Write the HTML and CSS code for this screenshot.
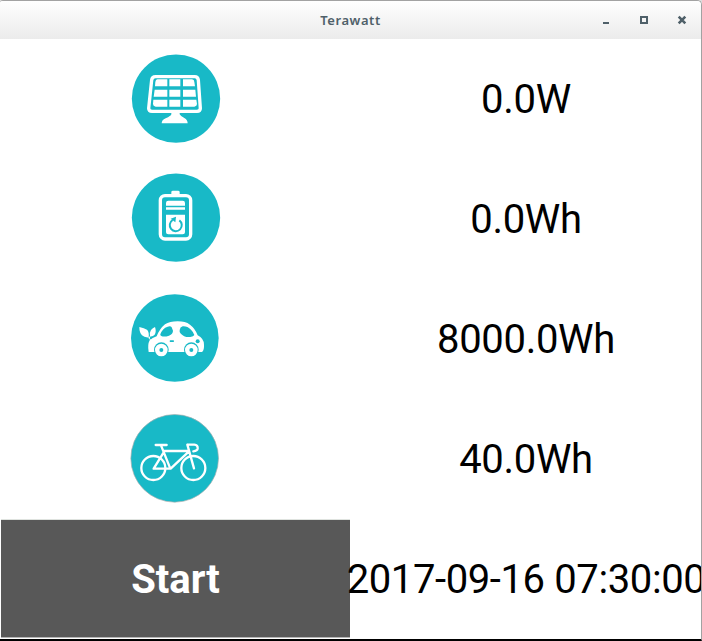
FILE: index.html
```html
<!DOCTYPE html>
<html lang="en">
<head>
<meta charset="utf-8">
<title>Terawatt</title>
<link rel="stylesheet" href="styles.css">
</head>
<body>
<div class="window">
  <header class="titlebar">
    <h1 class="title">Terawatt</h1>
    <div class="controls">
      <svg viewBox="0 0 10 10" shape-rendering="crispEdges"><path d="M2 7h6v2H2z" fill="#4f6069"/></svg>
      <svg viewBox="0 0 10 10" shape-rendering="crispEdges"><path d="M2 2h6v6H2z" fill="none" stroke="#4f6069" stroke-width="2"/></svg>
      <svg viewBox="0 0 10 10"><path d="M1.700 1.700l6.600 6.600M8.300 1.700l-6.600 6.600" stroke="#4f6069" stroke-width="2.600"/></svg>
    </div>
  </header>
  <main class="grid">
    <div class="cell">
      <svg class="icon" viewBox="3 3 300 300">
        <circle cx="153" cy="152" r="132.5" fill="#18b9c7"/>
        <path d="M92 86H209Q219 86 220 96L226 181Q226 190 216 190H81Q71 190 71 181L80 96Q81 86 92 86Z" fill="#18b9c7" stroke="#fff" stroke-width="10"/>
        <path d="M97 94H127V115H90L91 102Q92 95 97 94ZM133 94H166V115H133ZM174 94H201Q208 95 208 102L210 115H174ZM89 125H127V146H86ZM133 125H166V146H133ZM174 125H211L213 146H174ZM85 155H127V176H92Q84 175 84 168ZM133 155H166V176H133ZM174 155H214L216 168Q216 175 208 176H174Z" fill="#fff"/>
        <path d="M139 190H164V199Q166 204 178 210Q188 216 188 226H110Q110 216 122 211Q138 204 139 199Z" fill="#fff"/>
      </svg>
    </div>
    <div class="cell value">0.0W</div>
    <div class="cell">
      <svg class="icon" viewBox="3 3 300 300">
        <circle cx="153" cy="149" r="132.5" fill="#18b9c7"/>
        <path d="M139 80V72Q139 68 144 68H159Q164 68 164 72V80Z" fill="#fff"/>
        <rect x="106" y="83" width="91" height="130" rx="14" fill="none" stroke="#fff" stroke-width="10"/>
        <path d="M130 98H173Q180 98 180 105V113H123V105Q123 98 130 98ZM123 118H180V125H123ZM123 140H180V193Q180 199 173 199H130Q123 199 123 193Z" fill="#fff"/>
        <path d="M143 156A18 18 0 1 0 163 157" fill="none" stroke="#18b9c7" stroke-width="6"/>
        <path d="M137 152L153 146L151 163Z" fill="#18b9c7"/>
      </svg>
    </div>
    <div class="cell value">0.0Wh</div>
    <div class="cell">
      <svg class="icon" viewBox="3 3 300 300">
        <circle cx="149.500" cy="150" r="131.500" fill="#18b9c7"/>
        <path d="M71 192Q67 170 74 157Q82 149 95 145Q104 122 120 109Q134 100 158 100Q181 100 195 110Q211 122 218 142Q237 152 237 170Q238 187 231 192Z" fill="#fff"/>
        <path d="M43 117Q58 120 66 125Q73 131 71 148Q58 149 51 142Q43 134 43 117ZM90 117Q95 131 89 140Q84 146 75 145Q73 133 78 126Q83 120 90 117Z" fill="#fff"/>
        <path d="M71 148Q73 154 79 158M75 145L73 150" fill="none" stroke="#fff" stroke-width="3"/>
        <path d="M106 139Q112 121 128 116Q137 113 140 118L144 128Q144 138 132 143Q117 148 109 144Q105 143 106 139ZM164 126Q165 117 173 115Q187 114 198 125Q206 133 208 141Q206 146 196 147H184Q170 143 164 132Z" fill="#18b9c7"/>
        <rect x="134" y="157" width="13" height="5" rx="2" fill="#18b9c7"/>
        <circle cx="218" cy="160" r="6" fill="#18b9c7"/>
        <g fill="#18b9c7" stroke="#fff" stroke-width="13">
          <circle cx="109" cy="185" r="22" stroke="none"/>
          <circle cx="199" cy="185" r="22" stroke="none"/>
          <circle cx="109" cy="186" r="12.500"/>
          <circle cx="199" cy="186" r="12.500"/>
        </g>
      </svg>
    </div>
    <div class="cell value">8000.0Wh</div>
    <div class="cell">
      <svg class="icon" viewBox="3 3 300 300">
        <circle cx="149" cy="151" r="131.500" fill="#18b9c7" stroke="#a9aeae" stroke-width="2"/>
        <g fill="none" stroke="#fff" stroke-width="7" stroke-linecap="round" stroke-linejoin="round">
          <circle cx="85" cy="180" r="36"/>
          <circle cx="205" cy="180" r="36"/>
          <path d="M92 111H125M108 112L136 182M115 129H190M192 130L137 182H86L116 133M189 110H208Q219 111 218 122Q217 129 205 130M187 110L207 181"/>
        </g>
      </svg>
    </div>
    <div class="cell value">40.0Wh</div>
    <button class="start" type="button">Start</button>
    <div class="cell value date">2017-09-16 07:30:00</div>
  </main>
</div>
</body>
</html>
```
FILE: styles.css
```css
* { box-sizing: border-box; }
body {
  margin: 0;
  background: #dedede;
}
.window {
  width: 702px;
  height: 641px;
  overflow: hidden;
  border-top: 1px solid #a2a2a2;
  border-right: 1px solid #a2a2a2;
  border-bottom: 2px solid #000;
  border-radius: 3px 5px 0 0;
  background: #fff;
}
.titlebar {
  display: grid;
  grid-template-columns: 1fr auto 1fr;
  align-items: center;
  height: 38px;
  background: linear-gradient(#fefefe, #ebebeb);
}
.title {
  grid-column: 2;
  margin: 0;
  font: 600 13px/18px "Noto Sans", sans-serif;
  letter-spacing: 0.55px;
  color: #4f6069;
}
.controls {
  display: flex;
  justify-content: flex-end;
  gap: 28px;
  padding-right: 14px;
}
.controls svg {
  width: 10px;
  height: 10px;
}
.grid {
  display: grid;
  grid-template-columns: 350px 350px;
  grid-auto-rows: 120px;
  padding-left: 1px;
}
.cell {
  display: flex;
  align-items: center;
  justify-content: center;
  min-width: 0;
}
.icon {
  width: 100px;
  height: 100px;
}
.value {
  padding-top: 1px;
  font: 40px/48px Roboto, sans-serif;
  letter-spacing: -0.3px;
  color: #000;
  white-space: nowrap;
}
.date {
  letter-spacing: -0.39px;
}
.start {
  width: 349px;
  height: 119px;
  padding: 3px 0 0;
  border: solid #dfe3df;
  border-width: 1px 0;
  border-bottom-color: #b5b5b5;
  background: #585858;
  color: #fff;
  font: bold 40px/48px Roboto, sans-serif;
}
```
